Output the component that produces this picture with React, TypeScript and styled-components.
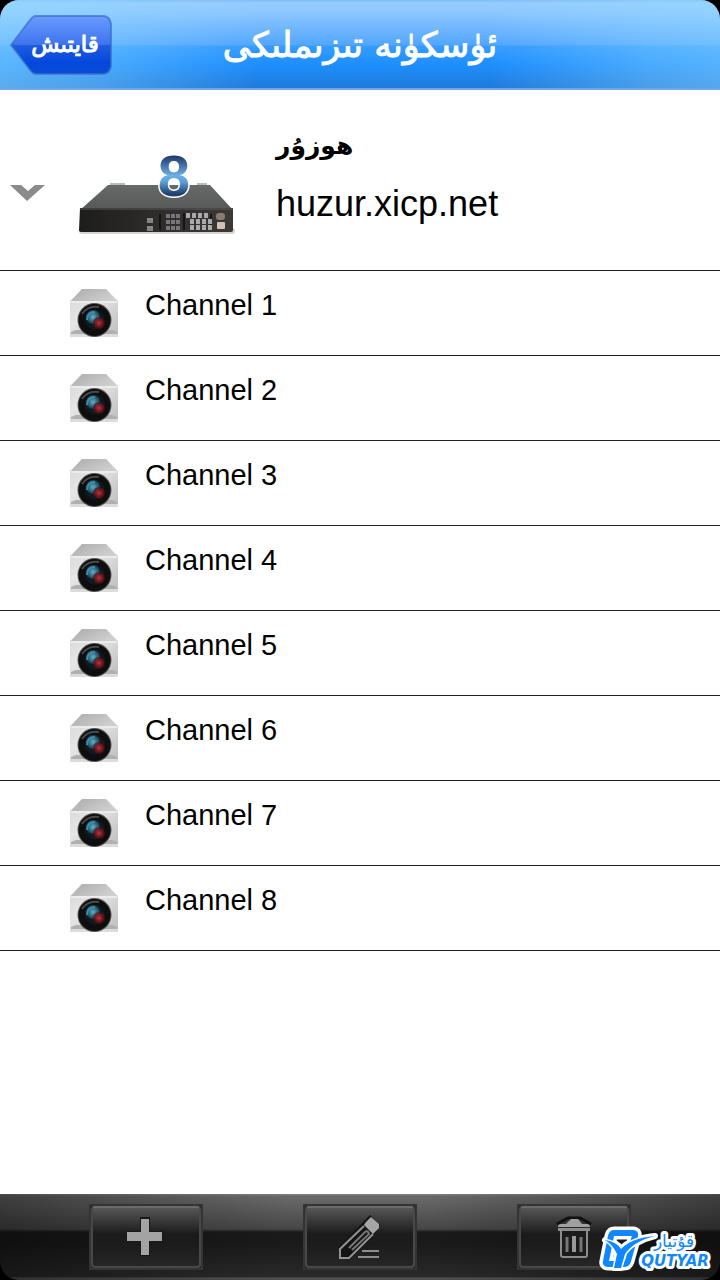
import React from "react";
import styled, { createGlobalStyle } from "styled-components";

const GlobalStyle = createGlobalStyle`
  * { box-sizing: border-box; }
  html, body { margin: 0; padding: 0; }
  body {
    background: #000;
    color: #000;
    font-family: "Liberation Sans", "DejaVu Sans", sans-serif;
  }
`;

const Screen = styled.div`
  display: flex;
  flex-direction: column;
  min-height: 100vh;
`;

const Header = styled.header`
  display: grid;
  grid-template-columns: 102px 1fr 102px;
  align-items: center;
  height: 90px;
  padding: 2px 10px 0;
  border-radius: 19px 19px 0 0;
  border-bottom: 2px solid #6aa8f0;
  background:
    linear-gradient(to right, rgba(150, 220, 255, 0.5), rgba(150, 220, 255, 0.36) 14%, rgba(150, 220, 255, 0) 36%,
      rgba(150, 220, 255, 0) 68%, rgba(150, 220, 255, 0.36) 90%, rgba(150, 220, 255, 0.45)),
    linear-gradient(to bottom, #7fbcf8 0, #96ccff 3px, #8ec7ff 12px, #52a6ff 45px, #369cff 46px, #1e8fff 64px, #1f7bdc 87px, #2e78d0 88px);
`;

const BackButton = styled.button`
  position: relative;
  display: flex;
  align-items: center;
  justify-content: center;
  width: 102px;
  height: 60px;
  padding: 0 4px 2px 12px;
  border: 0;
  background: none;
  color: #fff;
  font-family: "DejaVu Sans", sans-serif;
  font-size: 23px;
  line-height: 32px;
  -webkit-text-stroke: 1px #fff;
  cursor: pointer;
`;

const BackShape = styled.svg`
  position: absolute;
  inset: 0;
  z-index: 0;
`;

const BackLabel = styled.span`
  z-index: 1;
`;

const Title = styled.h1`
  margin: 0;
  color: #fff;
  font-family: "DejaVu Sans", sans-serif;
  font-size: 35px;
  font-weight: 400;
  line-height: 48px;
  text-align: center;
  white-space: nowrap;
  -webkit-text-stroke: 1px #fff;
`;

const Content = styled.main`
  flex: 1;
  background: #fff;
`;

const DeviceRow = styled.section`
  display: flex;
  align-items: center;
  height: 181px;
  padding-left: 9px;
  border-bottom: 1px solid #222;
`;

const ToggleButton = styled.button`
  display: flex;
  width: 37px;
  padding: 24px 0;
  margin: 26px 31px 0 0;
  border: 0;
  background: none;
  cursor: pointer;
`;

const DeviceImage = styled.svg`
  margin-top: 30px;
`;

const DeviceText = styled.div`
  display: flex;
  flex-direction: column;
  align-items: flex-start;
  gap: 16px;
  margin: 0 0 8px 37px;
`;

const DeviceName = styled.h2`
  margin: 0;
  font-family: "DejaVu Sans", sans-serif;
  font-size: 25px;
  line-height: 40px;
`;

const DeviceAddress = styled.p`
  margin: 0;
  font-size: 36px;
  line-height: 44px;
`;

const ChannelList = styled.ul`
  margin: 0;
  padding: 0;
  list-style: none;
`;

const ChannelRow = styled.li`
  display: flex;
  gap: 25px;
  height: 85px;
  padding: 16px 0 0 68px;
  border-bottom: 1px solid #222;
  font-size: 29px;
  line-height: 36px;
`;

const Toolbar = styled.footer`
  position: relative;
  display: flex;
  align-items: center;
  justify-content: space-between;
  height: 86px;
  padding: 0 89px;
  border-radius: 0 0 19px 19px;
  background:
    linear-gradient(to right, rgba(0, 0, 0, 0.4), rgba(0, 0, 0, 0) 40%, rgba(0, 0, 0, 0) 60%, rgba(0, 0, 0, 0.4)),
    linear-gradient(to bottom, #858585 0, #6a6a6a 2px, #464646 35px, #1a1a1a 38px, #1a1a1a 50px, #2a2a2a 83px, #555 84px, #4a4a4a 86px);
`;

const ToolButton = styled.button`
  display: flex;
  width: 114px;
  height: 66px;
  padding: 0;
  border: 2px solid #343434;
  background: #242424;
  cursor: pointer;
`;

const ToolFace = styled.span`
  display: flex;
  flex: 1;
  align-items: center;
  justify-content: center;
  align-self: stretch;
  border: 2px solid #484848;
  border-top-color: #6a6a6a;
  border-radius: 4px;
  background: linear-gradient(to bottom, #565656 0, #1b1b1b 26px, #1b1b1b 36px, #262626 58px);
`;

const Watermark = styled.svg`
  position: absolute;
  right: 6px;
  bottom: 6px;
  overflow: visible;
`;

function CameraIcon() {
  return (
    <svg width="52" height="52" viewBox="0 0 52 52" aria-hidden="true">
      <path d="M14 2H38L50 14V50H2V14Z" fill="url(#camBody)" />
      <path d="M14 2H38L49 14H3Z" fill="url(#camTop)" />
      <path d="M3 15H49" stroke="#ececec" strokeWidth="2" />
      <path d="M3 45L8 43H44L49 45V47H3Z" fill="#b0b0b0" />
      <path d="M2 48.500H50" stroke="#dcdcdc" strokeWidth="3" />
      <circle cx="26.500" cy="33" r="17" fill="#555" />
      <circle cx="26.500" cy="33" r="16" fill="#0e0e0e" />
      <path d="M14 27Q20 18 31 20" fill="none" stroke="#4a4a4a" strokeWidth="2" />
      <circle cx="26.500" cy="32.500" r="10" fill="#0d1a22" />
      <circle cx="25" cy="30" r="7" fill="url(#camBlue)" />
      <circle cx="31" cy="36" r="6" fill="url(#camRed)" />
      <path d="M19 33Q19 25 27 25" fill="none" stroke="#3f8cab" strokeWidth="2" />
    </svg>
  );
}

function DvrIcon() {
  return (
    <DeviceImage width="162" height="90" viewBox="0 0 162 90" overflow="visible" role="img" aria-label="DVR">
      <rect x="2" y="78" width="156" height="6" rx="3" fill="#d4d4d4" />
      <path d="M31 35H133L156 60H3Z" fill="url(#dvrTop)" />
      <path d="M33 34H48M120 34H130" stroke="#bbb" strokeWidth="2" />
      <path d="M3 58H156V80Q156 82 154 82H5Q2 82 2 80Z" fill="url(#dvrFront)" />
      <path d="M3 59H156" stroke="#5c5c5c" />
      <g fill="#8a8580">
        <rect x="70" y="68" width="6" height="5" />
        <rect x="70" y="76" width="6" height="5" />
      </g>
      <path d="M83 64V80M107 63V80M134 64V80" stroke="#151414" strokeWidth="2" />
      <g fill="#77777b">
        {[64, 70, 76].map((y) =>
          [89, 94, 99].map((x) => <rect key={x + "-" + y} x={x} y={y} width="4" height="4" />)
        )}
      </g>
      <g fill="#aaa9ab">
        {[63, 69, 75].map((y, r) =>
          [109, 115, 121, 127].map((x) => (
            <rect key={x + "-" + y} x={x + (r > 0 ? 4 : 0)} y={y} width="4" height="5" />
          ))
        )}
      </g>
      <rect x="139" y="63" width="9" height="7" rx="3" fill="#8a7b70" />
      <rect x="140" y="72" width="8" height="7" rx="1" fill="#cfc2b5" />
      <text
        x="97"
        y="46"
        textAnchor="middle"
        fontFamily="Liberation Sans"
        fontWeight="700"
        fontSize="58"
        fill="url(#digitFill)"
        stroke="#fff"
        strokeWidth="3"
        strokeLinejoin="round"
        paintOrder="stroke"
      >
        8
      </text>
    </DeviceImage>
  );
}

const Defs = styled.svg`
  position: absolute;
`;

function SharedGradients() {
  return (
    <Defs width="0" height="0" aria-hidden="true">
      <defs>
        <linearGradient id="camBody" x1="0" y1="0" x2="1" y2="1">
          <stop offset="0" stopColor="#d4d4d4" />
          <stop offset=".4" stopColor="#e6e6e6" />
          <stop offset="1" stopColor="#bdbdbd" />
        </linearGradient>
        <linearGradient id="camTop" x1="0" y1="0" x2="1" y2="0.5">
          <stop offset="0" stopColor="#ababab" />
          <stop offset="1" stopColor="#cecece" />
        </linearGradient>
        <radialGradient id="camBlue">
          <stop offset="0" stopColor="#5cb3d0" />
          <stop offset="1" stopColor="#173848" />
        </radialGradient>
        <radialGradient id="camRed">
          <stop offset="0" stopColor="#c83038" />
          <stop offset="1" stopColor="#4a0a10" stopOpacity=".7" />
        </radialGradient>
        <linearGradient id="dvrTop" x1="0" y1="0" x2="0" y2="1">
          <stop offset="0" stopColor="#666a69" />
          <stop offset="1" stopColor="#565957" />
        </linearGradient>
        <linearGradient id="dvrFront" x1="0" y1="0" x2="1" y2="0">
          <stop offset="0" stopColor="#1d1d1c" />
          <stop offset=".4" stopColor="#2b2928" />
          <stop offset="1" stopColor="#3d3938" />
        </linearGradient>
        <linearGradient id="digitFill" x1="0" y1="0" x2="0" y2="1">
          <stop offset=".2" stopColor="#20396a" />
          <stop offset=".5" stopColor="#6db0e4" />
          <stop offset=".6" stopColor="#5d9fd6" />
          <stop offset=".78" stopColor="#23406f" />
        </linearGradient>
        <linearGradient id="backFill" x1="0" y1="0" x2="0" y2="1">
          <stop offset="0" stopColor="#6b9bff" />
          <stop offset=".49" stopColor="#3d74ee" />
          <stop offset=".51" stopColor="#1f5be0" />
          <stop offset=".8" stopColor="#0448dc" />
          <stop offset="1" stopColor="#0a4bd6" />
        </linearGradient>
      </defs>
    </Defs>
  );
}

function PlusIcon() {
  return (
    <svg width="42" height="44" viewBox="0 0 42 44" aria-hidden="true">
      <path d="M15 2H25V16H38V27H25V41H15V27H2V16H15Z" fill="#181818" />
      <path d="M16 4H24V17H37V26H24V40H16V26H2V17H16Z" fill="#a3a3a3" />
    </svg>
  );
}

function EditIcon() {
  return (
    <svg width="48" height="44" viewBox="0 0 48 44" fill="none" overflow="visible" aria-hidden="true">
      <path d="M3 32L30 4L34 0L44 10L40 17L15 43H3Z" fill="#141414" />
      <path d="M30 7L35 2L43 9V13L37 19L28 10Z" fill="#a5a5a5" />
      <path d="M28 11L4 34V43H13L37 19" stroke="#929292" strokeWidth="2" />
      <path d="M13 33L29 17Q32 15 33 19L16 35" stroke="#777" strokeWidth="2" />
      <path d="M26 36H43M22 42H43" stroke="#8d8d8d" strokeWidth="2" />
    </svg>
  );
}

function TrashIcon() {
  return (
    <svg width="36" height="40" viewBox="0 0 36 40" fill="none" overflow="visible" aria-hidden="true">
      <path d="M1 7L12 1H24L35 7" stroke="#111" strokeWidth="3" />
      <path d="M2 10Q2 7 5 7H10L15 2H22L26 7H31Q34 7 34 10Z" fill="#a0a0a0" />
      <path d="M2 11H34V14H2Z" fill="#8c8c8c" />
      <path d="M5 14V38Q5 40 7 40H29Q31 40 31 38V14" fill="#1b1b1b" stroke="#8d8d8d" strokeWidth="2" />
      <path d="M11 20V35M25 20V35" stroke="#777" strokeWidth="3" />
      <path d="M18 19V35" stroke="#999" strokeWidth="4" />
    </svg>
  );
}

function QutyarLogo() {
  const frame = "M18 11H37Q40 11 39 14L32 39Q31 42 28 42H12Q9 42 10 39L15 14Q16 11 18 11Z";
  const bird = "M9 18Q21 20 25 27Q35 16 59 14Q38 19 29 32L25 46H18L21 32Q17 23 9 18Z";
  return (
    <Watermark width="118" height="52" viewBox="0 0 118 52" role="img" aria-label="QUTYAR">
      <g fill="#fff" stroke="#fff" strokeLinejoin="round">
        <path d={frame} strokeWidth="13" fill="none" />
        <path d={bird} strokeWidth="6" />
      </g>
      <g
        fontFamily="DejaVu Sans"
        fill="#1087ff"
        stroke="#fff"
        strokeWidth="6"
        strokeLinejoin="round"
        paintOrder="stroke"
      >
        <text x="78" y="25" textAnchor="middle" fontSize="17">قۇتيار</text>
        <text x="79" y="44" textAnchor="middle" fontSize="15" fontWeight="700" fontStyle="italic">QUTYAR</text>
      </g>
      <path d={frame} fill="none" stroke="#1087ff" strokeWidth="6" />
      <path d={bird} fill="#1087ff" stroke="#fff" strokeWidth="3" paintOrder="stroke" />
    </Watermark>
  );
}

const channels = [1, 2, 3, 4, 5, 6, 7, 8];

export default function App() {
  return (
    <Screen>
      <GlobalStyle />
      <SharedGradients />
      <Header>
        <BackButton type="button">
          <BackShape width="102" height="60" viewBox="0 0 102 60" aria-hidden="true">
            <path
              d="M25 1H94Q100 2 101 9V51Q100 58 94 59H25Q22 58 20 55L1 30L20 5Q22 2 25 1Z"
              fill="url(#backFill)"
              stroke="#3a6fc4"
              strokeWidth="2"
              strokeOpacity=".7"
            />
          </BackShape>
          <BackLabel lang="ug" dir="rtl">قايتىش</BackLabel>
        </BackButton>
        <Title lang="ug" dir="rtl">ئۈسكۈنە تىزىملىكى</Title>
      </Header>
      <Content>
        <DeviceRow>
          <ToggleButton type="button" aria-label="Collapse">
            <svg width="37" height="18" viewBox="0 0 37 18" aria-hidden="true">
              <path d="M1 1H12L19 7L26 1H36L18 17Z" fill="#8b8b8b" />
            </svg>
          </ToggleButton>
          <DvrIcon />
          <DeviceText>
            <DeviceName lang="ug" dir="rtl">ھوزۇر</DeviceName>
            <DeviceAddress>huzur.xicp.net</DeviceAddress>
          </DeviceText>
        </DeviceRow>
        <ChannelList>
          {channels.map((n) => (
            <ChannelRow key={n}>
              <CameraIcon />
              <span>Channel {n}</span>
            </ChannelRow>
          ))}
        </ChannelList>
      </Content>
      <Toolbar>
        <ToolButton type="button" aria-label="Add"><ToolFace><PlusIcon /></ToolFace></ToolButton>
        <ToolButton type="button" aria-label="Edit"><ToolFace><EditIcon /></ToolFace></ToolButton>
        <ToolButton type="button" aria-label="Delete"><ToolFace><TrashIcon /></ToolFace></ToolButton>
        <QutyarLogo />
      </Toolbar>
    </Screen>
  );
}
